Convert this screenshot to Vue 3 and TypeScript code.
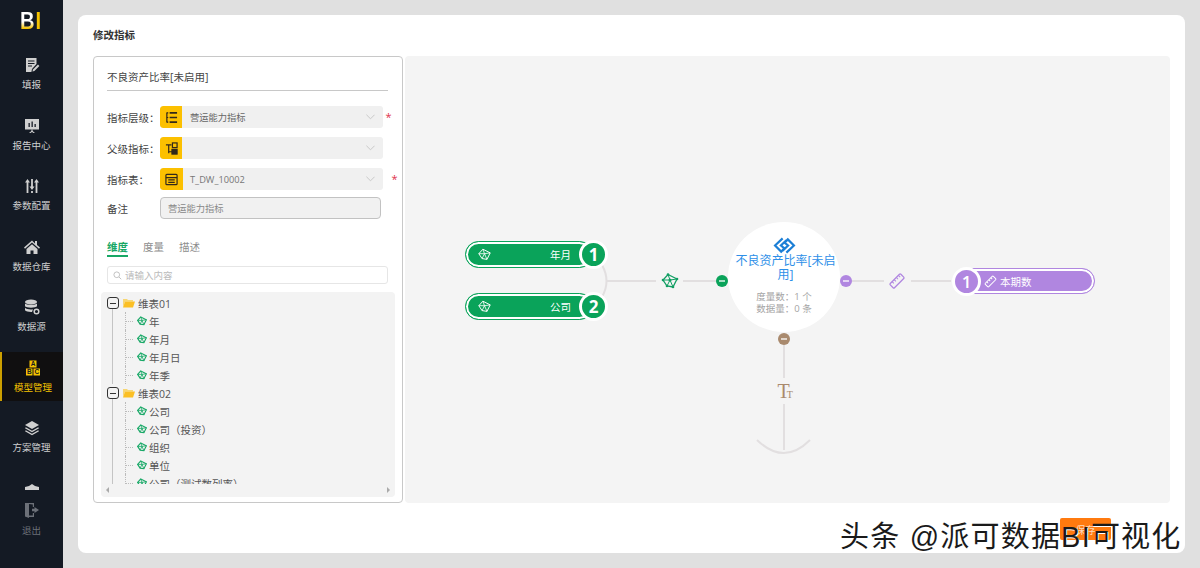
<script setup lang="ts">
interface NavItem { label: string; icon: string; active?: boolean }
const navItems: NavItem[] = [
  { label: '填报', icon: 'form' },
  { label: '报告中心', icon: 'report' },
  { label: '参数配置', icon: 'sliders' },
  { label: '数据仓库', icon: 'home' },
  { label: '数据源', icon: 'db' },
  { label: '模型管理', icon: 'abc', active: true },
  { label: '方案管理', icon: 'layers' },
  { label: '', icon: 'clip' },
]
interface FieldRow { label: string; value: string; icon: string; star: boolean; wide?: boolean }
const rows: FieldRow[] = [
  { label: '指标层级：', value: '营运能力指标', icon: 'list', star: true },
  { label: '父级指标：', value: '', icon: 'tree', star: false },
  { label: '指标表：', value: 'T_DW_10002', icon: 'table', star: true, wide: true },
]
const groups = [
  { name: '维表01', items: ['年', '年月', '年月日', '年季'] },
  { name: '维表02', items: ['公司', '公司（投资）', '组织', '单位', '公司（测试数列率）'] },
]
const dimPills = [
  { label: '年月', n: 1, top: 241 - 56 },
  { label: '公司', n: 2, top: 293 - 56 },
]
const meshOuter = 'M6 1.500L15 6l-4 8-6-1-4-6z'
const meshInner = 'M8 7L6 1.500M8 7l7-1M8 7l3 7M8 7l-3 6M8 7L1 7'
const meshDots: [number, number][] = [[6, 1.5], [15, 6], [11, 14], [5, 13], [1, 7]]
</script>

<template>
  <div class="page">
    <aside class="side">
      <div class="logo"><span class="logo-text"><span class="logo-b">B</span><span class="logo-i">I</span></span></div>
      <nav class="nav">
        <div v-for="item in navItems" :key="item.icon" class="nav-item" :class="{ active: item.active }">
          <svg class="nav-icon" viewBox="0 0 16 16" width="16" height="16">
            <g v-if="item.icon === 'form'" fill="currentColor">
              <path d="M2 1h10.500v6L8 12l-.6 3H2z" />
              <path d="M4 4h6.500M4 6.500h6.500M4 9h4" stroke="#141a24" stroke-width="1.100" fill="none" />
              <path d="M9 12.600l5-5 1.400 1.400-5 5-2 .6z" />
            </g>
            <g v-else-if="item.icon === 'report'" fill="currentColor">
              <path d="M1 1h14v10.500H1z" />
              <path d="M4.500 9V5h1.300v4zM7.500 9V3.500h1.300V9zM10.500 9V6h1.300v3z" fill="#141a24" />
              <path d="M7.400 11.500h1.200V13l2.400 2H9.500L8 14l-1.500 1H5l2.400-2z" />
            </g>
            <g v-else-if="item.icon === 'sliders'" fill="currentColor">
              <path d="M2.500 1L5 4.500H3.400V15H1.600V4.500H0z" transform="translate(1)" />
              <path d="M7.100 1h1.800v7.500H10.500L8 12 5.500 8.500h1.600zM7.100 13h1.800v2H7.100z" />
              <path d="M12.500 1L15 4.500h-1.600V15h-1.800V4.500H10z" />
            </g>
            <path v-else-if="item.icon === 'home'" fill="currentColor" d="M8 1.500L0 8.600l1 1.100L8 3.600l7 6.100 1-1.100-3-2.600V2h-2v2.400zM2.500 10L8 5.200l5.500 4.800v5H9.500v-3.500h-3V15h-4z" />
            <g v-else-if="item.icon === 'db'" fill="currentColor">
              <ellipse cx="7" cy="3" rx="6" ry="2.500" />
              <path d="M1 4.500c1 1.800 11 1.800 12 0v2.800c-1 1.800-11 1.800-12 0zM1 8.800c1 1.700 6.500 1.900 8 1.400L8 13c-3 .2-6-.5-7-1.700z" />
              <circle cx="12.500" cy="12.500" r="2.300" fill="none" stroke="currentColor" stroke-width="1.500" />
            </g>
            <g v-else-if="item.icon === 'abc'">
              <rect x="4.500" y="0.500" width="7" height="7" fill="#f5c300" />
              <rect x="1" y="8.500" width="6.500" height="7" fill="#f5c300" />
              <rect x="8.500" y="8.500" width="6.500" height="7" fill="#f5c300" />
              <text x="8" y="6.300" class="abc-text">A</text>
              <text x="4.250" y="14.300" class="abc-text">B</text>
              <text x="11.750" y="14.300" class="abc-text">C</text>
            </g>
            <g v-else-if="item.icon === 'layers'" fill="currentColor">
              <path d="M8 1l7 4-7 4-7-4z" />
              <path d="M1.800 7.300L8 10.800l6.200-3.500 .8 1-7 4-7-4z" />
              <path d="M1.800 10.300L8 13.800l6.200-3.500 .8 1-7 4-7-4z" />
            </g>
            <path v-else fill="currentColor" d="M1 6l4-1 3-2 3 2 4 1v5.500H1z" />
          </svg>
          <span v-if="item.label" class="nav-label">{{ item.label }}</span>
        </div>
      </nav>
      <div class="logout">
        <svg viewBox="0 0 16 16" width="16" height="16" class="nav-icon">
          <path fill="currentColor" d="M1 1h9v4H8.800V2.500L5 2v11.500h3.800V11H10v4H5v1L1 14.500z" />
          <path fill="currentColor" d="M10.500 5l4.500 3-4.500 3V9.300H8V6.700h2.500z" />
        </svg>
        <span class="nav-label">退出</span>
      </div>
    </aside>

    <main class="main">
      <section class="card">
        <h1 class="card-title">修改指标</h1>
        <div class="content">
          <div class="panel">
            <div class="panel-title">不良资产比率[未启用]</div>
            <div class="fields">
              <div v-for="row in rows" :key="row.icon" class="field">
                <label class="field-label">{{ row.label }}</label>
                <div class="select">
                  <span class="addon" :class="{ wide: row.wide }">
                    <svg viewBox="0 0 14 14" width="13" height="13">
                      <g v-if="row.icon === 'list'" fill="none" stroke="#33291a" stroke-width="1.300">
                        <path d="M2 1.500v11" />
                        <path d="M2 2h1.500M2 7h1.500M2 12h1.500" />
                        <path d="M5 2h8M5 7h8M5 12h8" stroke-width="1.800" />
                      </g>
                      <g v-else-if="row.icon === 'tree'" fill="none" stroke="#33291a" stroke-width="1.300">
                        <path d="M1 3h6M4 3v9" />
                        <rect x="8" y="1" width="5" height="5" />
                        <rect x="7.500" y="8" width="5.500" height="5" fill="#33291a" />
                        <path d="M4 10.500h3.500" />
                      </g>
                      <g v-else fill="none" stroke="#33291a" stroke-width="1.300">
                        <rect x="1" y="1.500" width="12" height="11" rx="1" />
                        <path d="M1 5h12M3.500 7.500h7M3.500 10h7" />
                      </g>
                    </svg>
                  </span>
                  <span class="select-value" :class="{ wide: row.wide }">{{ row.value }}</span>
                  <svg class="chev" viewBox="0 0 10 6" width="9" height="6"><path d="M.5.500L5 5 9.500.5" fill="none" stroke="#c4c4c4" stroke-width="1" /></svg>
                </div>
                <span v-if="row.star" class="star" :class="{ far: row.wide }">*</span>
              </div>
              <div class="field note">
                <label class="field-label">备注</label>
                <div class="note-box">营运能力指标</div>
              </div>
            </div>
            <div class="tabs">
              <span class="tab on">维度</span>
              <span class="tab">度量</span>
              <span class="tab">描述</span>
            </div>
            <div class="search">
              <svg viewBox="0 0 12 12" width="9" height="9"><circle cx="5" cy="5" r="3.800" fill="none" stroke="#bbb" stroke-width="1.200" /><path d="M8 8l3 3" stroke="#bbb" stroke-width="1.200" /></svg>
              <span>请输入内容</span>
            </div>
            <div class="tree">
              <div class="tree-scroll">
                <div v-for="(g, gi) in groups" :key="g.name" class="group">
                  <div class="tree-row root">
                    <span class="toggle"></span>
                    <svg class="folder" viewBox="0 0 12 10" width="12" height="10">
                      <path d="M0 1h4l1 1h5v1.500H2L0 9z" fill="#f7d774" />
                      <path d="M2 3.500h10L10 9.500H0z" fill="#fbbf24" />
                    </svg>
                    <span>{{ g.name }}</span>
                  </div>
                  <div class="children" :class="{ first: gi === 0 }">
                    <div v-for="it in g.items" :key="it" class="tree-row leaf">
                      <svg class="leaf-ic" viewBox="0 0 16 16" width="10" height="10">
                        <g fill="none" stroke="#16a765">
                          <path :d="meshOuter" stroke-width="1.800" />
                          <path :d="meshInner" stroke-width="1.300" />
                        </g>
                      </svg>
                      <span>{{ it }}</span>
                    </div>
                  </div>
                </div>
              </div>
              <div class="hbar"><i class="arr l"></i><i class="arr r"></i></div>
            </div>
          </div>

          <div class="canvas">
            <svg class="wires" viewBox="405 56 765 447" width="765" height="447">
              <g fill="none" stroke="#e2dfe0" stroke-width="2">
                <path d="M602 265q9 16 0 32" />
                <path d="M607 281h49" />
                <path d="M683 281h33" />
                <path d="M852 281h32" />
                <path d="M911 281h40" />
                <path d="M784 345v33" />
                <path d="M784 404v46" />
                <path d="M757 440q27 26 53 0" />
              </g>
              <circle cx="722" cy="281" r="6" fill="#0aa35a" />
              <path d="M719 281h6" stroke="#fff" stroke-width="1.300" />
              <circle cx="846" cy="281" r="6" fill="#b086e0" />
              <path d="M843 281h6" stroke="#fff" stroke-width="1.300" />
              <circle cx="784" cy="339" r="6" fill="#a98a6e" />
              <path d="M781 339h6" stroke="#fff" stroke-width="1.300" />
              <g transform="translate(662 273)" stroke="#119e63" fill="none">
                <path :d="meshOuter" stroke-width="1.300" />
                <path :d="meshInner" stroke-width="1" />
                <circle v-for="d in meshDots" :key="d[0]" :cx="d[0]" :cy="d[1]" r="1.300" fill="#119e63" stroke="none" />
                <circle cx="8" cy="7" r="1.500" fill="#119e63" stroke="none" />
              </g>
              <g transform="translate(897 281) rotate(-45)" fill="none" stroke="#b086e0" stroke-width="1.300">
                <rect x="-7.500" y="-3" width="15" height="6" rx="1" />
                <path d="M-4 -3v2.500M-1 -3v2.500M2 -3v2.500M5 -3v2.500" stroke-width="1" />
              </g>
              <text x="777.500" y="398" class="tt"><tspan class="big">T</tspan><tspan class="small" dx="-3">T</tspan></text>
            </svg>

            <div v-for="p in dimPills" :key="p.n" class="dim-pill" :style="{ top: p.top + 'px' }">
              <div class="dim-inner">
                <svg viewBox="0 0 16 16" width="13" height="13">
                  <g fill="none" stroke="#fff">
                    <path :d="meshOuter" stroke-width="1.200" />
                    <path :d="meshInner" stroke-width="1" />
                  </g>
                </svg>
                <span class="pill-text">{{ p.label }}</span>
              </div>
              <span class="num green">{{ p.n }}</span>
            </div>

            <div class="center-node">
              <svg viewBox="0 0 24 18" width="23" height="17">
                <path d="M10 1.500L2 9l6.500 6.500L12 12 8.200 9 14 3.500" fill="none" stroke="#1c7fd6" stroke-width="2.300" />
                <path d="M14 16.500L22 9l-6.500-6.500L12 6l3.800 3L10 14.500" fill="none" stroke="#1c7fd6" stroke-width="2.300" />
              </svg>
              <div class="center-title">不良资产比率[未启用]</div>
              <div class="center-stat">度量数：1 个</div>
              <div class="center-stat">数据量：0 条</div>
            </div>

            <div class="measure-pill">
              <span class="num purple">1</span>
              <svg viewBox="0 0 16 16" width="13" height="13">
                <g transform="translate(8 8) rotate(-45)" fill="none" stroke="#fff" stroke-width="1.200">
                  <rect x="-7" y="-3" width="14" height="6" rx="1" />
                  <path d="M-3.500 -3v2.500M0 -3v2.500M3.500 -3v2.500" />
                </g>
              </svg>
              <span class="pill-text">本期数</span>
            </div>
          </div>
        </div>
        <div class="foot"><button class="save" type="button">保存</button></div>
      </section>
    </main>
    <div class="watermark">头条 @派可数据BI可视化</div>
  </div>
</template>

<style>
html, body { margin: 0; padding: 0; background: #e0e0e0; }
</style>

<style scoped>
.page {
  position: relative;
  display: flex;
  width: 1200px;
  height: 568px;
  overflow: hidden;
  background: #e0e0e0;
  font-family: "Open Sans", "Noto Sans CJK SC", sans-serif;
  font-size: 11px;
  color: #333;
}
.side {
  position: relative;
  width: 63px;
  flex: none;
  background: #141a24;
  color: #d0d0d0;
  display: flex;
  flex-direction: column;
}
.logo {
  height: 36px;
  box-sizing: border-box;
  text-align: center;
  font: 700 24px/42px "Liberation Sans", sans-serif;
}
.logo-text { display: inline-block; transform: scaleX(.84); letter-spacing: 1px; }
.logo-b {
  background: linear-gradient(180deg, #fff 0 55%, #f5c300 80%);
  -webkit-background-clip: text;
  background-clip: text;
  color: transparent;
}
.logo-i { color: #f5c300; }
.nav {
  margin-top: 13px;
  height: 441px;
  overflow: hidden;
  display: flex;
  flex-direction: column;
  gap: 11.500px;
}
.nav-item {
  height: 49px;
  flex: none;
  box-sizing: border-box;
  padding-top: 8px;
  display: flex;
  flex-direction: column;
  align-items: center;
  gap: 5px;
}
.nav-item.active {
  background: #100f10;
  color: #f5c300;
  box-shadow: inset 2px 0 0 #cc9f00;
  padding-left: 3px;
}
.nav-icon { flex: none; }
.nav-label { font-size: 9.500px; line-height: 14px; color: inherit; white-space: nowrap; }
.logout {
  position: absolute;
  left: 0;
  right: 0;
  top: 493px;
  height: 50px;
  padding-top: 9px;
  box-sizing: border-box;
  display: flex;
  flex-direction: column;
  align-items: center;
  gap: 6px;
  color: #6c7078;
  background: #141a24;
}
.abc-text { font: 700 6.500px "Liberation Sans", sans-serif; fill: #141a24; text-anchor: middle; }

.main {
  flex: 1;
  min-width: 0;
  box-sizing: border-box;
  padding: 15px;
}
.card {
  height: 538px;
  background: #fff;
  border-radius: 8px;
  box-sizing: border-box;
  padding: 14px 15px 0;
  display: flex;
  flex-direction: column;
}
.card-title { margin: 0 0 14px; font-size: 10.500px; line-height: 13px; font-weight: 700; color: #333; }
.content { display: flex; gap: 2px; height: 447px; }
.panel {
  width: 310px;
  flex: none;
  box-sizing: border-box;
  border: 1px solid #c8c8c8;
  border-radius: 4px;
  padding: 0 7px 5px;
  display: flex;
  flex-direction: column;
}
.panel-title {
  margin: 0 7px 0 6px;
  height: 34px;
  padding-top: 10px;
  box-sizing: border-box;
  border-bottom: 1px solid #c8c8c8;
  font-size: 10.500px;
  line-height: 20px;
  color: #444;
}
.fields { margin: 15px 0 0 6px; display: flex; flex-direction: column; gap: 9px; }
.field { position: relative; display: flex; align-items: center; height: 22px; }
.field-label { width: 53px; flex: none; font-size: 10.500px; color: #444; white-space: nowrap; }
.select {
  width: 222.500px;
  height: 22px;
  flex: none;
  display: flex;
  align-items: center;
  background: #f0f0f0;
  border-radius: 3px;
  overflow: hidden;
  color: #666;
}
.addon {
  width: 22px;
  height: 22px;
  flex: none;
  background: #fcc000;
  display: flex;
  align-items: center;
  justify-content: center;
  border-radius: 3px 0 0 3px;
}
.addon.wide { width: 23px; }
.select-value { flex: 1; padding-left: 8px; font-size: 9.250px; }
.select-value.wide { padding-left: 7px; color: #777; }
.chev { margin-right: 8px; flex: none; }
.star { margin-left: 3px; color: #e0314b; font-size: 11px; line-height: 14px; }
.star.far { margin-left: 9px; }
.note { margin-top: -2px; }
.note-box {
  width: 221px;
  height: 22px;
  flex: none;
  box-sizing: border-box;
  border: 1px solid #c2c2c2;
  border-radius: 4px;
  background: #f1f1f1;
  padding-left: 7px;
  font-size: 9.250px;
  line-height: 22px;
  color: #888;
}
.tabs { margin: 20px 7px 0 6px; display: flex; gap: 15px; height: 18px; }
.tab { font-size: 10.500px; line-height: 16px; color: #8e8e8e; box-sizing: border-box; height: 18px; }
.tab.on { color: #17a765; font-weight: 700; border-bottom: 2px solid #17a765; }
.search {
  margin: 9px 7px 0 6px;
  height: 18px;
  box-sizing: border-box;
  border: 1px solid #e6e6e6;
  border-radius: 3px;
  padding-left: 5px;
  display: flex;
  align-items: center;
  gap: 3px;
  font-size: 9.500px;
  color: #bbb;
}
.tree {
  margin-top: 8px;
  height: 205px;
  background: #f3f3f3;
  border-radius: 4px;
  display: flex;
  flex-direction: column;
  overflow: hidden;
}
.tree-scroll { height: 192px; box-sizing: border-box; padding: 2px 0 0 6px; overflow: hidden; }
.tree-row { display: flex; align-items: center; height: 18px; font-size: 10.500px; color: #555; white-space: nowrap; }
.toggle {
  position: relative;
  width: 12px;
  height: 12px;
  box-sizing: border-box;
  border: 1px solid #333;
  border-radius: 3px;
  margin-right: 4px;
  flex: none;
}
.toggle::after { content: ""; position: absolute; left: 2px; right: 2px; top: 4.500px; height: 1px; background: #333; }
.folder { margin-right: 3px; flex: none; }
.children { position: relative; padding-left: 18px; }
.children::before { content: ""; position: absolute; left: 5px; top: -3px; bottom: 0; border-left: 1px solid #c4c4c4; }
.children:not(.first)::before { bottom: -10px; }
.leaf { position: relative; padding-left: 12px; }
.leaf::before { content: ""; position: absolute; left: 0; top: 0; height: 100%; border-left: 1px dotted #bbb; }
.leaf::after { content: ""; position: absolute; left: 0; top: 9px; width: 8px; border-top: 1px dotted #bbb; }
.leaf-ic { margin-right: 2px; flex: none; }
.hbar { position: relative; height: 13px; flex: none; }
.arr { position: absolute; top: 3px; border: 3px solid transparent; }
.arr.l { left: 2px; border-right-color: #aaa; }
.arr.r { right: 2px; border-left-color: #aaa; }

.canvas {
  position: relative;
  flex: 1;
  background: #f4f4f4;
  border-radius: 4px;
  overflow: hidden;
}
.wires { position: absolute; left: 0; top: 0; }
.tt { fill: #a98a6e; font-family: "Liberation Serif", serif; }
.tt .big { font-size: 20px; }
.tt .small { font-size: 10px; }
.dim-pill {
  position: absolute;
  left: 60px;
  width: 142px;
  height: 27px;
  box-sizing: border-box;
}
.dim-inner {
  position: absolute;
  left: 0;
  top: 0;
  width: 128px;
  height: 27px;
  box-sizing: border-box;
  border: 1px solid #0aa35a;
  border-radius: 14px;
  background: #0aa35a;
  box-shadow: inset 0 0 0 2px #fff;
  display: flex;
  align-items: center;
  justify-content: space-between;
  padding: 0 21px 0 12px;
  color: #fff;
}
.pill-text { font-size: 10.500px; color: #fff; }
.num {
  position: absolute;
  width: 29px;
  height: 29px;
  box-sizing: border-box;
  border: 3px solid #fff;
  border-radius: 50%;
  color: #fff;
  font-size: 17px;
  font-weight: 700;
  line-height: 23px;
  text-align: center;
}
.num.green { background: #0aa35a; left: 114px; top: -1px; }
.num.purple { background: #b086e0; left: -14px; top: -2px; font-weight: 600; }
.center-node {
  position: absolute;
  left: 323px;
  top: 166px;
  width: 112px;
  height: 110px;
  box-sizing: border-box;
  padding-top: 15px;
  background: #fff;
  border-radius: 50%;
  display: flex;
  flex-direction: column;
  align-items: center;
}
.center-title { margin: 0 0 0 3px; width: 106px; text-align: center; font-size: 12px; line-height: 14px; color: #2d8fe8; }
.center-stat { font-size: 9.500px; line-height: 12px; color: #a4a4a4; white-space: nowrap; }
.center-title + .center-stat { margin-top: 9px; }
.measure-pill {
  position: absolute;
  left: 560px;
  top: 212px;
  width: 130px;
  height: 26px;
  box-sizing: border-box;
  background: #b086e0;
  border: 1px solid #b086e0;
  box-shadow: inset 0 0 0 2px #fff;
  border-radius: 0 13px 13px 0;
  display: flex;
  align-items: center;
  gap: 3px;
  padding-left: 18px;
}
.foot { display: flex; justify-content: flex-end; padding: 15px 59px 0 0; }
.save {
  width: 51px;
  height: 22px;
  padding: 0;
  border: 0;
  border-radius: 2px;
  background: #ff7a0f;
  color: #ffd9b8;
  font: 10px "Open Sans", "Noto Sans CJK SC", sans-serif;
}
.watermark {
  position: absolute;
  left: 840px;
  top: 516px;
  font-family: "Liberation Sans", "Noto Sans CJK SC", sans-serif;
  font-size: 29px;
  letter-spacing: 1.200px;
  line-height: 42px;
  color: #1a1a1a;
  white-space: nowrap;
  text-shadow: 1px 1px 0 #fff;
}
</style>
